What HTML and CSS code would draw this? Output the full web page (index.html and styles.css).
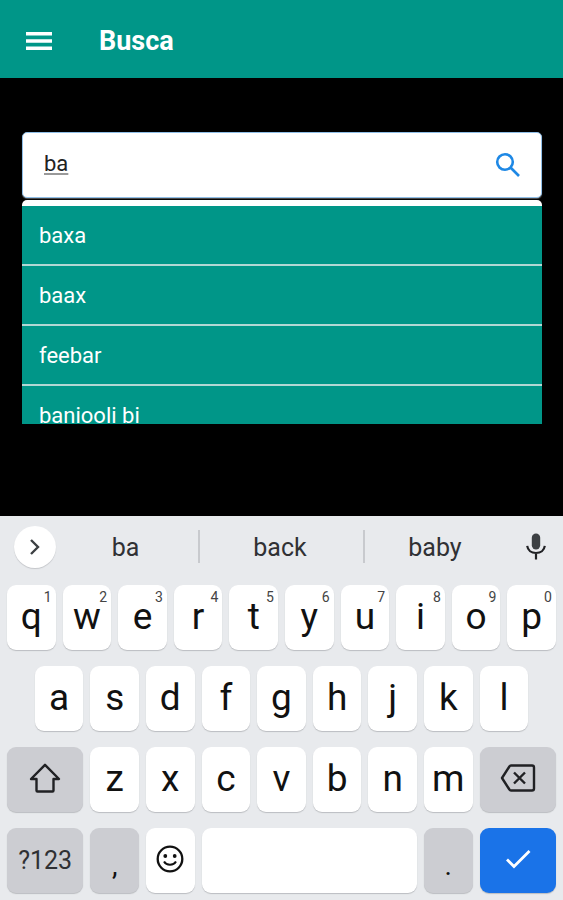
FILE: index.html
```html
<!DOCTYPE html>
<html lang="en">
<head>
  <meta charset="UTF-8" />
  <meta name="viewport" content="width=device-width, initial-scale=1.0"/>
  <title>Busca</title>
  <link rel="stylesheet" href="styles.css">
</head>
<body>

<header class="topbar">
  <button class="menu-btn" aria-label="Menu">
    <svg width="26" height="18" viewBox="0 0 26 18"><path d="M0 1.7h26M0 9h26M0 16.3h26" stroke="#fff" stroke-width="3.4"/></svg>
  </button>
  <h1>Busca</h1>
</header>

<main class="content">
  <div class="search">
    <input type="text" id="search" aria-label="Search" value="ba" spellcheck="false"/>
    <button class="search-btn" aria-label="Search">
      <svg width="26" height="26" viewBox="0 0 26 26" fill="none" stroke="#1e88e5" stroke-width="2.6"><circle cx="10" cy="10" r="7.8"/><path d="M15.5 15.5l8.5 8.5"/></svg>
    </button>
  </div>
  <ul class="results">
    <li><button>baxa</button></li>
    <li><button>baax</button></li>
    <li><button>feebar</button></li>
    <li><button>baniooli bi</button></li>
  </ul>
</main>

<section class="keyboard" aria-label="Keyboard">
  <div class="suggestions">
    <button class="expand" aria-label="More">
      <svg width="12" height="18" viewBox="0 0 12 18" fill="none" stroke="#3c4043" stroke-width="2.4"><path d="M2 2l7 7-7 7"/></svg>
    </button>
    <button class="word">ba</button>
    <button class="word">back</button>
    <button class="word">baby</button>
    <button class="mic" aria-label="Voice input">
      <svg width="20" height="27" viewBox="0 0 20 27"><rect x="5.8" y="0.5" width="8.4" height="16" rx="4.2" fill="#3c4043"/><path d="M1.2 12.8c.6 4.5 4.2 7.2 8.8 7.2s8.2-2.7 8.8-7.2M10 20v6.5" fill="none" stroke="#202124" stroke-width="2.2"/></svg>
    </button>
  </div>

  <div class="keys">
    <button class="key">q<sup>1</sup></button>
    <button class="key">w<sup>2</sup></button>
    <button class="key">e<sup>3</sup></button>
    <button class="key">r<sup>4</sup></button>
    <button class="key">t<sup>5</sup></button>
    <button class="key">y<sup>6</sup></button>
    <button class="key">u<sup>7</sup></button>
    <button class="key">i<sup>8</sup></button>
    <button class="key">o<sup>9</sup></button>
    <button class="key">p<sup>0</sup></button>

    <button class="key indent">a</button>
    <button class="key">s</button>
    <button class="key">d</button>
    <button class="key">f</button>
    <button class="key">g</button>
    <button class="key">h</button>
    <button class="key">j</button>
    <button class="key">k</button>
    <button class="key">l</button>

    <button class="key wide gray first" aria-label="Shift">
      <svg width="32" height="30" viewBox="0 0 32 30" fill="none" stroke="#202124" stroke-width="2.4" stroke-linejoin="round"><path d="M16 1.8L30 16h-5.5v11.5q0 1-1 1h-15q-1 0-1-1V16H2z"/></svg>
    </button>
    <button class="key">z</button>
    <button class="key">x</button>
    <button class="key">c</button>
    <button class="key">v</button>
    <button class="key">b</button>
    <button class="key">n</button>
    <button class="key">m</button>
    <button class="key wide gray" aria-label="Delete">
      <svg width="36" height="28" viewBox="0 0 36 28" fill="none" stroke="#202124" stroke-width="2.4" stroke-linejoin="round"><path d="M11 1.5h21q2 0 2 2v21q0 2-2 2H11q-1 0-1.6-1L2 14l7.4-11.5q.6-1 1.6-1z"/><path d="M14 8.500l11 11M25 8.500l-11 11"/></svg>
    </button>

    <button class="key wide gray symbols">?123</button>
    <button class="key gray punct">,</button>
    <button class="key" aria-label="Emoji">
      <svg width="28" height="28" viewBox="0 0 28 28"><circle cx="14" cy="14" r="12.3" fill="none" stroke="#111" stroke-width="2.3"/><circle cx="9.3" cy="11" r="1.9" fill="#111"/><circle cx="18.7" cy="11" r="1.9" fill="#111"/><path d="M8 16.5c2.5 4.3 9.5 4.3 12 0" fill="none" stroke="#111" stroke-width="2"/></svg>
    </button>
    <button class="key space" aria-label="Space"></button>
    <button class="key gray punct">.</button>
    <button class="key wide enter" aria-label="Done">
      <svg width="26" height="20" viewBox="0 0 26 20" fill="none" stroke="#fff" stroke-width="2.8"><path d="M2 10.5l7 7L24.5 2"/></svg>
    </button>
  </div>
</section>

</body>
</html>
```
FILE: styles.css
```css
:root {
  --teal: #009688;
  --line: #b2d8d4;
  --keyboard: #e8eaed;
  --key-gray: #cccdd2;
  --blue: #1a73e8;
}
* {
  box-sizing: border-box;
}
body {
  margin: 0;
  min-height: 100vh;
  display: flex;
  flex-direction: column;
  font-family: Roboto, sans-serif;
  background: #000;
}
button {
  border: none;
  padding: 0;
  background: none;
  font-family: inherit;
  color: inherit;
  cursor: pointer;
}
svg {
  display: block;
}
.topbar {
  display: flex;
  align-items: center;
  gap: 47px;
  height: 78px;
  padding: 3px 26px 0;
  background: var(--teal);
  color: #fff;
}
h1 {
  margin: 0;
  font-size: 27px;
  font-weight: 700;
}
.content {
  padding: 54px 21px 0 22px;
}
.search {
  display: flex;
  align-items: center;
  height: 66px;
  padding: 0 20px 0 21px;
  background: #fff;
  border: 1px solid #90bfe8;
  border-radius: 5px;
  box-shadow: 0 1px 1px #555;
}
.search input {
  flex: 1;
  min-width: 0;
  border: none;
  outline: none;
  padding: 0 0 4px;
  background: none;
  font-family: inherit;
  font-size: 22px;
  color: #222;
  text-decoration: underline #999;
}
.results {
  list-style: none;
  margin: 2px 0 0;
  padding: 6px 0 0;
  max-height: 224px;
  overflow-y: auto;
  scrollbar-width: none;
  background: #fff;
  border-radius: 5px 5px 0 0;
}
.results li {
  background: var(--teal);
  border-bottom: 2px solid var(--line);
}
.results button {
  width: 100%;
  height: 58px;
  padding: 0 17px;
  text-align: left;
  font-size: 22px;
  color: #fff;
}
.keyboard {
  margin-top: auto;
  padding-bottom: 7px;
  background: var(--keyboard);
  color: #111;
}
.suggestions {
  display: grid;
  grid-template-columns: 42px 142fr 165fr 145fr 55px;
  align-items: center;
  height: 69px;
  padding: 0 0 8px 14px;
}
.expand {
  display: flex;
  align-items: center;
  justify-content: center;
  height: 42px;
  border-radius: 50%;
  background: #fff;
  box-shadow: 0 1px 1px #c4c6ca;
}
.word {
  height: 33px;
  padding: 2px 3px 0 0;
  font-size: 25px;
  color: #303134;
}
.word + .word {
  border-left: 2px solid #c8cace;
}
.mic {
  display: flex;
  justify-content: center;
}
.keys {
  display: grid;
  grid-template-columns: repeat(20, 1fr);
  grid-auto-rows: 65px;
  gap: 16px 7px;
  padding: 0 7px;
}
.key {
  position: relative;
  grid-column: span 2;
  display: flex;
  align-items: center;
  justify-content: center;
  min-width: 0;
  padding-bottom: 3px;
  border-radius: 9px;
  background: #fff;
  box-shadow: 0 1px 1px #bbbdc1;
  font-size: 37px;
}
.key sup {
  position: absolute;
  top: 4px;
  right: 4px;
  font-size: 14px;
  line-height: 16px;
  color: #444;
}
.indent {
  grid-column: 2 / span 2;
}
.wide {
  grid-column: span 3;
}
.first {
  grid-column: 1 / span 3;
}
.space {
  grid-column: span 8;
}
.gray {
  background: var(--key-gray);
}
.symbols {
  padding-bottom: 0;
  font-size: 25px;
  color: #303134;
}
.punct {
  padding: 10px 0 0;
  font-size: 28px;
}
.enter {
  background: var(--blue);
}
```
